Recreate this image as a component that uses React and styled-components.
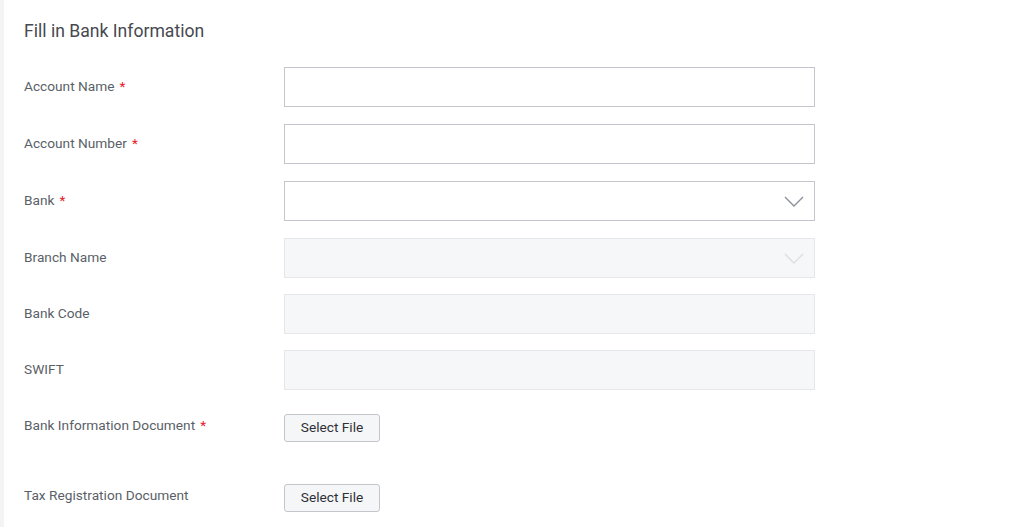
import styled, { createGlobalStyle } from "styled-components";

const GlobalStyle = createGlobalStyle`
  html, body {
    margin: 0;
    padding: 0;
    background: #ffffff;
    font-family: Roboto, "Liberation Sans", Arial, sans-serif;
  }
`;

const fields = [
  { label: "Account Name", required: true, kind: "input", gap: 17 },
  { label: "Account Number", required: true, kind: "input", gap: 17 },
  { label: "Bank", required: true, kind: "select", gap: 17 },
  { label: "Branch Name", kind: "select", disabled: true, gap: 16 },
  { label: "Bank Code", kind: "input", disabled: true, gap: 16 },
  { label: "SWIFT", kind: "input", disabled: true, gap: 24 },
  { label: "Bank Information Document", required: true, kind: "file", gap: 42 },
  { label: "Tax Registration Document", kind: "file", gap: 0 },
];

function Chevron({ muted }) {
  return (
    <ChevronIcon width="20" height="11" viewBox="0 0 20 11" $muted={muted}>
      <path d="M1 1 L10 10 L19 1" fill="none" strokeWidth="1.4" />
    </ChevronIcon>
  );
}

export default function App() {
  return (
    <>
      <GlobalStyle />
      <Page>
        <Side />
        <Content>
          <Title>Fill in Bank Information</Title>
          {fields.map((f) => (
            <Row key={f.label} $gap={f.gap}>
              <Label $file={f.kind === "file"}>
                {f.label}
                {f.required && <Star>*</Star>}
              </Label>
              {f.kind === "file" ? (
                <FileButton type="button">Select File</FileButton>
              ) : (
                <Field $disabled={f.disabled}>
                  {f.kind === "select" && <Chevron muted={f.disabled} />}
                </Field>
              )}
            </Row>
          ))}
        </Content>
      </Page>
    </>
  );
}

const Page = styled.div`
  display: flex;
  min-height: 527px;
  background: #ffffff;
`;

const Side = styled.div`
  width: 4px;
  flex-shrink: 0;
  background: #f4f4f5;
`;

const Content = styled.div`
  padding: 20px 0 0 20px;
  display: flex;
  flex-direction: column;
`;

const Title = styled.h2`
  margin: 0 0 25px;
  font-size: 17.6px;
  font-weight: 400;
  line-height: 22px;
  color: #464950;
`;

const Row = styled.div`
  display: flex;
  align-items: flex-start;
  margin-bottom: ${(p) => p.$gap}px;
`;

const Label = styled.div`
  width: 260px;
  flex-shrink: 0;
  padding-top: ${(p) => (p.$file ? "2px" : "10px")};
  font-size: 13.7px;
  line-height: 18px;
  color: #5b5f68;
`;

const Star = styled.span`
  color: #e8202a;
  margin-left: 5px;
`;

const Field = styled.div`
  box-sizing: border-box;
  width: 531px;
  height: 40px;
  border: 1px solid ${(p) => (p.$disabled ? "#e6e7ea" : "#c4c6cc")};
  background: ${(p) => (p.$disabled ? "#f6f7f9" : "#ffffff")};
  display: flex;
  align-items: center;
  justify-content: flex-end;
  padding-right: 10px;
`;

const ChevronIcon = styled.svg`
  stroke: ${(p) => (p.$muted ? "#dcdee2" : "#8b909a")};
`;

const FileButton = styled.button`
  box-sizing: border-box;
  width: 96px;
  height: 28px;
  border: 1px solid #c4c6cc;
  border-radius: 3px;
  background: #f5f6f8;
  color: #2e3036;
  font-family: Roboto, "Liberation Sans", Arial, sans-serif;
  font-size: 13.7px;
  padding: 0 0 2px;
  cursor: pointer;
`;
